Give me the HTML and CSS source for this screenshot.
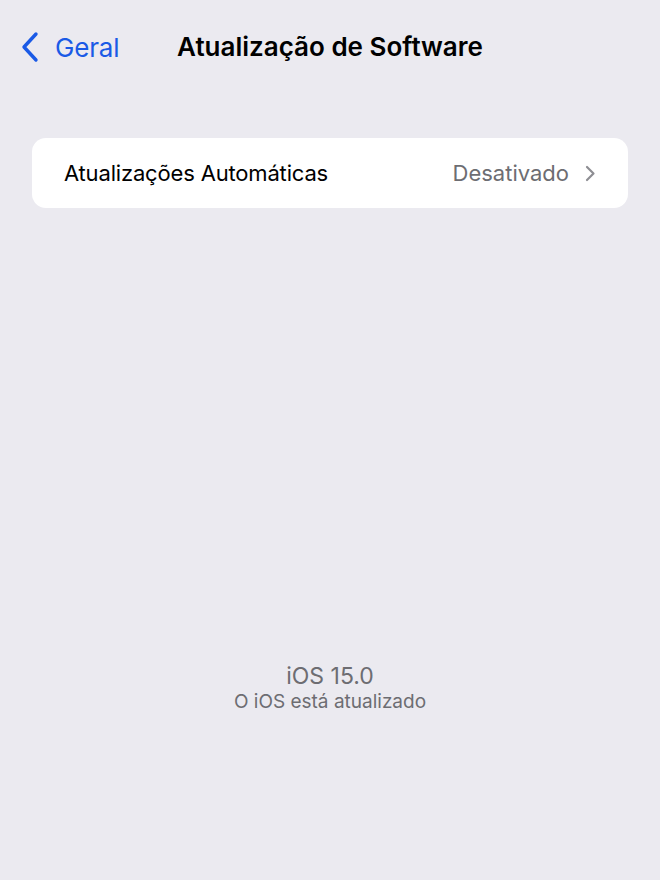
FILE: index.html
```html
<!DOCTYPE html>
<html lang="pt">
<head>
<meta charset="utf-8">
<link rel="stylesheet" href="styles.css">
</head>
<body>
<div class="screen">
  <header class="nav">
    <div class="back">
      <svg class="back-icon" width="20" height="32" viewBox="0 0 20 32"><path d="M16 3 L4 16 L16 29" fill="none" stroke="#1a5ae6" stroke-width="3.4" stroke-linecap="round" stroke-linejoin="round"/></svg>
      <span class="back-label">Geral</span>
    </div>
    <h1 class="title">Atualização de Software</h1>
  </header>
  <section class="card">
    <div class="row">
      <span class="row-label">Atualizações Automáticas</span>
      <span class="row-value">Desativado</span>
      <svg class="chev" width="11" height="17" viewBox="0 0 11 17"><path d="M2 2 L8.5 8.5 L2 15" fill="none" stroke="#8e8e93" stroke-width="2.2" stroke-linecap="round" stroke-linejoin="round"/></svg>
    </div>
  </section>
  <footer class="status">
    <div class="version">iOS 15.0</div>
    <div class="note">O iOS está atualizado</div>
  </footer>
</div>
</body>
</html>
```
FILE: styles.css
```css
html, body {
  margin: 0;
  padding: 0;
  background: #ebeaf0;
}
body {
  font-family: Inter, "Noto Sans", sans-serif;
  -webkit-font-smoothing: antialiased;
}
.screen {
  width: 660px;
  height: 880px;
  display: flex;
  flex-direction: column;
}
.nav {
  height: 96px;
  position: relative;
  display: flex;
  align-items: flex-start;
}
.back {
  display: flex;
  align-items: center;
  padding: 31px 0 0 20px;
  gap: 15px;
}
.back-icon {
  display: block;
}
.back-label {
  font-size: 26px;
  color: #1a5ae6;
  letter-spacing: -0.2px;
}
.title {
  position: absolute;
  left: 0;
  right: 0;
  top: 30px;
  margin: 0;
  text-align: center;
  font-size: 26px;
  font-weight: 600;
  color: #000;
  letter-spacing: 0px;
  line-height: 34px;
  pointer-events: none;
}
.card {
  margin: 42px 32px 0;
  background: #fff;
  border-radius: 14px;
}
.row {
  height: 70px;
  display: flex;
  align-items: center;
  padding: 0 32px;
}
.row-label {
  flex: 1;
  font-size: 22px;
  color: #000;
  letter-spacing: -0.17px;
}
.row-value {
  font-size: 22px;
  color: #6d6d72;
  letter-spacing: 0px;
  margin-right: 16px;
}
.chev {
  display: block;
}
.status {
  margin-top: 454px;
  text-align: center;
  color: #6d6d72;
}
.version {
  font-size: 23px;
  line-height: 28px;
}
.note {
  font-size: 19px;
  line-height: 24px;
}
```
